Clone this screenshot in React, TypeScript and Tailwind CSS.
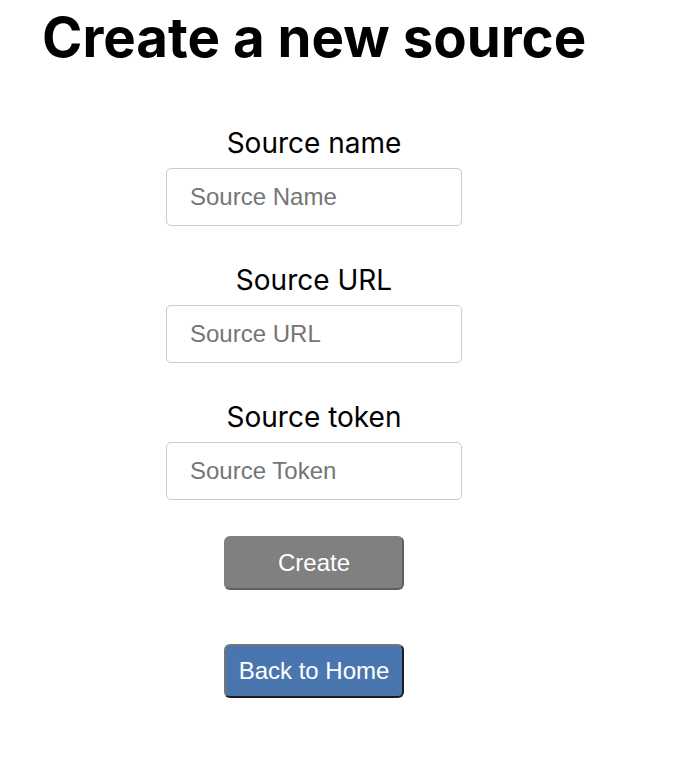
import React from "react";

function Field({ label, placeholder, first }: { label: string; placeholder: string; first?: boolean }) {
  return (
    <div className={`flex flex-col items-center ${first ? "mt-[62px]" : "mt-[38px]"}`}>
      <label className="text-[28px] leading-[32px] text-black font-[Inter,sans-serif]">{label}</label>
      <input
        type="text"
        placeholder={placeholder}
        className="mt-[9px] w-[296px] h-[58px] border border-[#cccccc] rounded-[5px] pl-[23px] text-[24px] font-['Liberation_Sans',Arial,sans-serif] placeholder:text-[#757575] outline-none"
      />
    </div>
  );
}

export default function App() {
  return (
    <div className="bg-white min-h-[760px] font-[Inter,sans-serif]">
      <div className="ml-[42px] w-[544px] pt-[10px]">
        <h1 className="text-[54.6px] leading-[55px] font-bold text-black whitespace-nowrap">Create a new source</h1>
        <div className="flex flex-col items-center">
          <Field label="Source name" placeholder="Source Name" first />
          <Field label="Source URL" placeholder="Source URL" />
          <Field label="Source token" placeholder="Source Token" />
          <button className="mt-[36px] w-[180px] h-[54px] rounded-[6px] border-2 border-t-[#7f7f7f] border-l-[#7f7f7f] border-b-[#5e5e5e] border-r-[#5e5e5e] bg-[#808080] text-white text-[24px] font-['Liberation_Sans',Arial,sans-serif]">
            Create
          </button>
          <button className="mt-[54px] w-[180px] h-[54px] rounded-[6px] border-2 border-t-[#767676] border-l-[#767676] border-b-[#1c1c1c] border-r-[#1c1c1c] bg-[#4a76b0] text-white text-[24px] font-['Liberation_Sans',Arial,sans-serif]">
            Back to Home
          </button>
        </div>
      </div>
    </div>
  );
}
